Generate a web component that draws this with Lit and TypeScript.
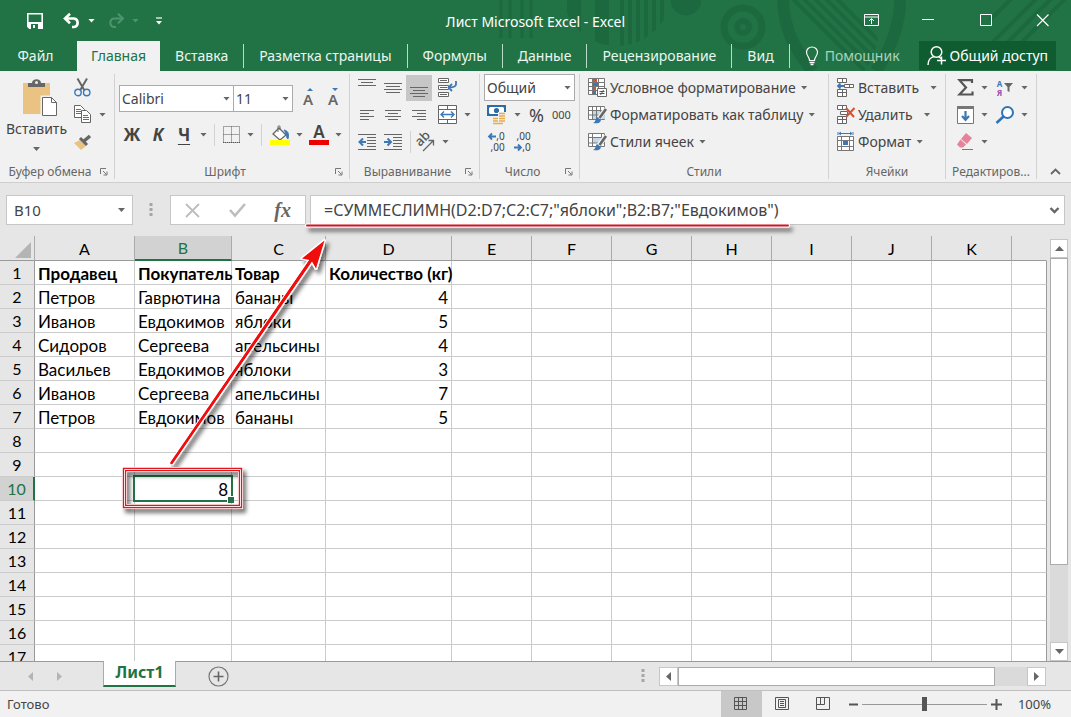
import { LitElement, html, svg, css, nothing, TemplateResult } from "lit";
import { customElement, property, state } from "lit/decorators.js";
import { classMap } from "lit/directives/class-map.js";

type Icon = { w: number; h: number; art: TemplateResult };

const lines = (rows: number[][]) =>
  rows.map(([x1, x2, y]) => svg`<path d="M${x1} ${y}H${x2}" stroke="#666"/>`);

const ICONS: Record<string, Icon> = {
  save: { w: 16, h: 16, art: svg`<path d="M.8.800h14.400v14.400H2.500L.8 13.500z" fill="none" stroke="#fff" stroke-width="1.600"/><path d="M1 9h14v6H1z" fill="#fff"/><path d="M4 11h7v5H4z" fill="#217346"/><path d="M6 12h2v3H6z" fill="#fff"/>` },
  undo: { w: 18, h: 15, art: svg`<path d="M2 5.500H11a4.300 4.300 0 0 1 0 8.500H9" fill="none" stroke="#fff" stroke-width="2.600"/><path d="M7 0.800 2 5.500l5 4.700" fill="none" stroke="#fff" stroke-width="2.600"/>` },
  redo: { w: 18, h: 15, art: svg`<path d="M16 5.500H7A4.300 4.300 0 0 0 7 14H9" fill="none" stroke="#4f9470" stroke-width="2"/><path d="m11 0.800 5 4.700-5 4.700" fill="none" stroke="#4f9470" stroke-width="2"/>` },
  qat: { w: 8, h: 8, art: svg`<path d="M1 1h6" stroke="#fff" stroke-width="1.200"/><path d="M1 4h6L4 7.500z" fill="#fff"/>` },
  ribbonOpts: { w: 16, h: 13, art: svg`<path d="M.5.500h14v11H.5zM.5 3h14M7.500 10V5M5 7l2.500-2.500L10 7" fill="none" stroke="#fff"/>` },
  min: { w: 13, h: 13, art: svg`<path d="M0 5.500h12" stroke="#fff"/>` },
  max: { w: 13, h: 13, art: svg`<path d="M1.500.500h11v11h-11z" fill="none" stroke="#fff"/>` },
  close: { w: 13, h: 13, art: svg`<path d="m1 .5 11.500 11.500m0-11.500L1 12" stroke="#fff" stroke-width="1.200"/>` },
  bulb: { w: 14, h: 20, art: svg`<path d="M4.500 14.500C4.500 11 1.500 10 1.500 6.200a5.500 5.200 0 0 1 11 0c0 3.800-3 4.800-3 8.300z" fill="none" stroke="#fff" stroke-width="1.200"/><path d="M4.500 16.500h5M5.500 18.500h3" stroke="#fff" stroke-width="1.400"/>` },
  person: { w: 19, h: 22, art: svg`<circle cx="9.500" cy="7" r="5.300" fill="none" stroke="#fff" stroke-width="1.500"/><path d="M1 20c0-5 3-8 6.500-8.500M11.500 11.500l2.500 2M14.500 11.500v8M10 15.500h9" fill="none" stroke="#fff" stroke-width="1.500"/>` },
  paste: { w: 35, h: 38, art: svg`<g transform="translate(4 0)"><path d="M0 4h27v31H0z" fill="#eac282"/><path d="M5 4h4c0-5 9-5 9 0h4v4H5z" fill="#666"/><circle cx="13.500" cy="3.500" r="1.500" fill="#eee"/><path d="M19 18h10l5 5v14H19z" fill="#fff" stroke="#f1f1f1" stroke-width="3"/><path d="M19.500 18.500h9l5 5v13h-14zM28.500 18.500v5h5" fill="#fff" stroke="#666"/></g>` },
  cut: { w: 17, h: 19, art: svg`<path d="m3.500 0.500 7 12M13 .5l-7 12" stroke="#666" stroke-width="2"/><circle cx="4" cy="14.500" r="3.200" fill="#f1f1f1" stroke="#3d78b5" stroke-width="1.400"/><circle cx="12.700" cy="14.500" r="3.200" fill="#f1f1f1" stroke="#3d78b5" stroke-width="1.400"/>` },
  copy: { w: 18, h: 19, art: svg`<path d="M.5.500h6l4 4v8H.5z" fill="#fff" stroke="#666"/><path d="M2 4.500h5M2 6.500h5M2 8.500h5" stroke="#3d78b5"/><path d="M7.500 5.500h5l4 4v8h-9z" fill="#fff" stroke="#666"/><path d="M9 10.500h5M9 12.500h6M9 14.500h6" stroke="#3d78b5"/>` },
  brush: { w: 18, h: 16, art: svg`<path d="m0 9 6-3 6 6-5 4z" fill="#eac282"/><path d="m6 4 7 7" stroke="#666" stroke-width="3"/><path d="m10 7 6-5" stroke="#666" stroke-width="3.500"/>` },
  borders: { w: 18, h: 18, art: svg`<path d="M.5.500h16v16H.5zM8.500.500v16M.5 8.500h16" fill="none" stroke="#555" stroke-dasharray="1 1"/><path d="M0 16.500h17" stroke="#555" stroke-dasharray="1 1"/>` },
  fill: { w: 20, h: 20, art: svg`<path d="m3 9 6-6 7 7-6 5z" fill="#fff" stroke="#666" stroke-width="1.300"/><path d="M8 7V1.500c0-1 2-1 2 0V5" fill="none" stroke="#666"/><path d="M14 5c5 1 5 5 4 9-2-1-1-5-4-9z" fill="#3d78b5" stroke="#3d78b5"/><path d="M0 15h20v5H0z" fill="#ff0"/>` },
  top: { w: 18, h: 18, art: svg`${lines([[0, 18, 0.5], [3, 15, 3.5], [0, 18, 6.5]])}` },
  middle: { w: 18, h: 18, art: svg`${lines([[0, 18, 4.5], [2, 16, 7.5], [0, 18, 10.5], [2, 16, 13.5]])}` },
  bottom: { w: 18, h: 18, art: svg`${lines([[0, 18, 8.5], [3, 15, 11.5], [0, 18, 14.5], [3, 15, 17.5]])}` },
  wrap: { w: 19, h: 19, art: svg`<path d="M.5.500h10v4H.5zM.5 7.500h10v4H.5zM.5 14.500h10v4H.5z" fill="#fff" stroke="#666"/><path d="M2 2.500h7M2 9.500h7M2 16.500h7" stroke="#666"/><path d="M18 3v3c0 3-3 3.500-7 3.500M14 6l-3.500 3.500L14 13" fill="none" stroke="#3d78b5" stroke-width="1.800"/>` },
  left: { w: 18, h: 18, art: svg`${lines([[2, 16, 4.5], [2, 11, 7.5], [2, 16, 10.5], [2, 11, 13.5]])}` },
  center: { w: 18, h: 18, art: svg`${lines([[1, 17, 4.5], [4, 14, 7.5], [1, 17, 10.5], [4, 14, 13.5]])}` },
  right: { w: 18, h: 18, art: svg`${lines([[2, 16, 4.5], [7, 16, 7.5], [2, 16, 10.5], [7, 16, 13.5]])}` },
  merge: { w: 19, h: 19, art: svg`<path d="M.5.500h18v18H.5zM.5 4.500h18M.5 14.500h18M9.500.500v4M9.500 14.500v4" fill="#fff" stroke="#666"/><path d="M3 9.500h13M6 6.500l-3 3 3 3M13 6.500l3 3-3 3" fill="none" stroke="#3d78b5" stroke-width="1.400"/>` },
  outdent: { w: 18, h: 18, art: svg`${lines([[0, 18, 1.5], [9, 18, 4.5], [9, 18, 7.5], [9, 18, 10.5], [9, 18, 13.5], [0, 18, 16.5]])}<path d="M1 9h7M5 5.500 1.500 9 5 12.500" fill="none" stroke="#3d78b5" stroke-width="2"/>` },
  indent: { w: 18, h: 18, art: svg`${lines([[0, 18, 1.5], [9, 18, 4.5], [9, 18, 7.5], [9, 18, 10.5], [9, 18, 13.5], [0, 18, 16.5]])}<path d="M0 9h7M3.500 5.500 7 9l-3.500 3.500" fill="none" stroke="#3d78b5" stroke-width="2"/>` },
  orient: { w: 20, h: 20, art: svg`<text transform="translate(5 15) rotate(-45)" font-size="13" font-weight="500" fill="#555">ab</text><path d="m8 19 10-10M13.500 8.500h5v5" fill="none" stroke="#666" stroke-width="1.300"/>` },
  money: { w: 19, h: 19, art: svg`<path d="M1 1h17v9H1z" fill="#fff" stroke="#2e6ca4" stroke-width="2"/><path d="M1 1h3L1 4zM18 1v3l-3-3zM1 10V7l3 3z" fill="#2e6ca4"/><circle cx="9.500" cy="5.500" r="2.600" fill="#2e6ca4"/><path d="M11 7h8v11h-8zM5 12h7v7H5z" fill="#f1f1f1"/><path d="M12 8.500h6M12 11h6M12 13.500h6M12 16h6M6 13.500h5M6 16h5M6 18.500h10" stroke="#e8ab4e" stroke-width="1.500"/>` },
  cond: { w: 19, h: 19, art: svg`<path d="M.5.500h16v16H.5zM.5 4.500h16M.5 8.500h16M.5 12.500h16M4.500.500v16M10.500.500v16" fill="#fff" stroke="#777"/><path d="M5 1h4v3H5zM5 9h3v3H5z" fill="#d35230"/><path d="M5 5h5v3H5zM5 13h3v3H5z" fill="#3d78b5"/><path d="M9.500 10.500h9v8h-9z" fill="#fff" stroke="#666"/><path d="M11.500 13.500h5M11.500 15.500h5M15.500 12l-3 5" stroke="#555"/>` },
  table: { w: 19, h: 18, art: svg`<path d="M.5.500h16v13H.5z" fill="#fff" stroke="#777"/><path d="M5 5h12v8H5z" fill="#c4d7e8"/><path d="M.5 4.500h16M.5 9h16M4.500.500v13M8.500.500v13M12.500.500v13" stroke="#777"/><path d="m18 3-7 9" stroke="#f1f1f1" stroke-width="5"/><path d="m18 3-6.500 9" stroke="#666" stroke-width="2.600"/><path d="m9 11 4 3c-1 4-5 3.500-8 3 3-1 2-4 4-6z" fill="#3d78b5"/>` },
  styles: { w: 19, h: 18, art: svg`<path d="M.5.500h16v13H.5z" fill="#fff" stroke="#777"/><path d="M5 5h8v5H5z" fill="#c4d7e8"/><path d="M.5 4.500h16M.5 10h16M4.500.500v13M13.500.500v13" stroke="#777"/><path d="m18 3-7 9" stroke="#f1f1f1" stroke-width="5"/><path d="m18 3-6.500 9" stroke="#666" stroke-width="2.600"/><path d="m9 11 4 3c-1 4-5 3.500-8 3 3-1 2-4 4-6z" fill="#3d78b5"/>` },
  insert: { w: 18, h: 19, art: svg`<path d="M.5.500h9v4h-9zM5.500.500v4M.5 11.500h9v7h-9zM5.500 11.500v7M.5 14.500h9M7.500 6.500h9v3h-9zM12.500 6.500v3" fill="#fff" stroke="#666"/><path d="M1 8h6M3.500 5.500 1 8l2.500 2.500" fill="none" stroke="#3d78b5" stroke-width="1.800"/>` },
  remove: { w: 18, h: 19, art: svg`<path d="M.5.500h9v4h-9zM5.500.500v4M.5 11.500h9v7h-9zM5.500 11.500v7M.5 14.500h9M3.500 6.500h7v3h-7z" fill="#fff" stroke="#666"/><path d="m9 3 8 9M17.500 3 9 12" stroke="#d35230" stroke-width="2"/>` },
  format: { w: 18, h: 20, art: svg`<path d="M.5 4.500h16v14H.5z" fill="#fff" stroke="#777"/><path d="M.5 8.500h16M.5 14.500h16M4.500 4.500v14M12.500 4.500v14" stroke="#777"/><path d="M6 9h5v4H6z" fill="#3d78b5"/><path d="M2 1.500h13M4 0 2 1.500 4 3M13 0l2 1.500L13 3M1 0v3M16 0v3" fill="none" stroke="#3d78b5"/>` },
  sum: { w: 17, h: 17, art: svg`<path d="M15 4V1.200H2.500L9 8.500l-6.500 7H15.500V12.500" fill="none" stroke="#555" stroke-width="2.200"/>` },
  down: { w: 17, h: 18, art: svg`<path d="M.5.500h16v17H.5z" fill="#fff" stroke="#777"/><path d="M0 0h17v3H0z" fill="#777"/><path d="M8.500 5v8M5 10l3.500 3.800L12 10" fill="none" stroke="#3d78b5" stroke-width="2.200"/>` },
  eraser: { w: 18, h: 17, art: svg`<path d="m10 0 6 5-5 6-6-5z" fill="#e8829a"/><path d="m4.500 6.500 5.500 5-3 3H4l-3-3z" fill="#e8829a"/><path d="M6 16.500h11" stroke="#777"/>` },
  funnel: { w: 9, h: 9, art: svg`<path d="M0 0h9L5.500 4v5l-2-1V4z" fill="#666"/>` },
  find: { w: 18, h: 18, art: svg`<circle cx="11.500" cy="6.500" r="5.500" fill="#fff" stroke="#2e75b6" stroke-width="2"/><path d="m7.500 10.500-7 6.500" stroke="#2e75b6" stroke-width="2.600"/>` },
  arrowL: { w: 8, h: 7, art: svg`<path d="M1 3.500h7M4 .5l-3 3 3 3" fill="none" stroke="#3d78b5" stroke-width="1.800"/>` },
  arrowR: { w: 8, h: 7, art: svg`<path d="M0 3.500h7M4 .5l3 3-3 3" fill="none" stroke="#3d78b5" stroke-width="1.800"/>` },
  launcher: { w: 8, h: 8, art: svg`<path d="M.5 6V.500H6M3 3l3.500 3.500M7 3.500V7H3.500" fill="none" stroke="#777"/>` },
  collapse: { w: 11, h: 7, art: svg`<path d="m1 6 4.500-4.500L10 6" fill="none" stroke="#666" stroke-width="1.800"/>` },
  expand: { w: 11, h: 7, art: svg`<path d="m1.500 1 4 4 4-4" fill="none" stroke="#666" stroke-width="2.400"/>` },
  cancel: { w: 15, h: 15, art: svg`<path d="m1 1 13 13M14 1 1 14" stroke="#bdbdbd" stroke-width="1.800"/>` },
  accept: { w: 17, h: 14, art: svg`<path d="m1 7 5 5.500L16 1" fill="none" stroke="#bdbdbd" stroke-width="2.600"/>` },
  dots: { w: 4, h: 14, art: svg`<path d="M.5 0h3v3h-3zM.5 5h3v3h-3zM.5 10h3v3h-3z" fill="#a6a6a6"/>` },
  plusCircle: { w: 21, h: 21, art: svg`<circle cx="10.500" cy="10.500" r="9.500" fill="none" stroke="#777" stroke-width="1.200"/><path d="M5.500 10.500h10M10.500 5.500v10" stroke="#666" stroke-width="1.600"/>` },
  triUp: { w: 9, h: 5, art: svg`<path d="M0 5 4.500 0 9 5z" fill="#666"/>` },
  triDown: { w: 9, h: 5, art: svg`<path d="M0 0 4.500 5 9 0z" fill="#666"/>` },
  triLeft: { w: 5, h: 9, art: svg`<path d="M5 0 0 4.500 5 9z" fill="#666"/>` },
  triRight: { w: 5, h: 9, art: svg`<path d="M0 0 5 4.500 0 9z" fill="#666"/>` },
  navLeft: { w: 5, h: 9, art: svg`<path d="M5 0 0 4.500 5 9z" fill="#b4b4b4"/>` },
  navRight: { w: 5, h: 9, art: svg`<path d="M0 0 5 4.500 0 9z" fill="#b4b4b4"/>` },
  normal: { w: 14, h: 14, art: svg`<path d="M.5.500h12v12H.5zM4.500.500v12M8.500.500v12M.5 4.500h12M.5 8.500h12" fill="none" stroke="#555"/>` },
  layout: { w: 14, h: 14, art: svg`<path d="M.5.500h13v12H.5zM3.500 2.500h7v8h-7zM5 4.500h4M5 6.500h4M5 8.500h4" fill="none" stroke="#555"/>` },
  pageBreak: { w: 14, h: 14, art: svg`<path d="M.5.500h13v12H.5zM4.500.500v7M8.500.500v7M.5 7.500h8" fill="none" stroke="#555"/>` },
  zoomOut: { w: 9, h: 11, art: svg`<path d="M0 5.500h9" stroke="#555" stroke-width="2"/>` },
  zoomIn: { w: 11, h: 11, art: svg`<path d="M0 5.500h11M5.500 0v11" stroke="#555" stroke-width="2"/>` },
};

const icon = (name: string) => {
  const i = ICONS[name];
  return html`<svg width=${i.w} height=${i.h} viewBox="0 0 ${i.w} ${i.h}" aria-hidden="true">${i.art}</svg>`;
};

const base = css`
  :host { font-family: "Noto Sans", "Open Sans", sans-serif; font-size: 14px; line-height: 20px; color: #444; }
  * { box-sizing: border-box; }
  svg { display: block; flex: none; overflow: visible; }
  button { font: inherit; color: inherit; background: none; border: 0; padding: 0; margin: 0; flex: none;
    display: flex; align-items: center; justify-content: center; white-space: nowrap; }
  .caret { width: 7px; height: 4px; flex: none; background: #666; clip-path: polygon(0 0, 100% 0, 50% 100%); }
`;

@customElement("xl-title-bar")
class TitleBar extends LitElement {
  static styles = [base, css`
    :host { display: grid; grid-template-columns: 1fr auto 1fr; height: 41px; align-items: center; color: #fff; }
    .quick { display: flex; align-items: center; padding-left: 27px; gap: 7px; }
    .quick .undo { margin-left: 13px; }
    .quick .redo { margin-left: 5px; }
    .quick .more { margin-left: 9px; }
    .light { background: #fff; }
    .dim { background: #4f9470; }
    .title { padding-top: 2px; }
    .window { display: flex; justify-content: flex-end; }
    .window button { width: 57px; height: 38px; }
  `];
  render() {
    return html`
      <div class="quick">
        <button aria-label="Сохранить">${icon("save")}</button>
        <button class="undo" aria-label="Отменить">${icon("undo")}</button>
        <span class="caret light"></span>
        <button class="redo" aria-label="Вернуть">${icon("redo")}</button>
        <span class="caret dim"></span>
        <button class="more" aria-label="Настройка панели">${icon("qat")}</button>
      </div>
      <div class="title">Лист Microsoft Excel - Excel</div>
      <div class="window">
        <button aria-label="Параметры ленты">${icon("ribbonOpts")}</button>
        <button aria-label="Свернуть">${icon("min")}</button>
        <button aria-label="Развернуть">${icon("max")}</button>
        <button aria-label="Закрыть">${icon("close")}</button>
      </div>`;
  }
}

@customElement("xl-tabs")
class Tabs extends LitElement {
  @state() active = "Главная";
  static styles = [base, css`
    :host { display: flex; height: 30px; color: #e9f7ef; }
    .tab { padding: 0 15px; }
    .file { width: 77px; padding: 0 6px 0 0; }
    .tab.line { border-right: 1px solid #b9dcc8; height: 24px; align-self: center; }
    .tab.active { background: #f1f1f1; color: #217346; padding: 0 14px; }
    .tell { gap: 6px; padding: 0 16px 0 15px; color: #a9d3bb; }
    .share { gap: 4px; background: #0f5c30; padding: 0 8px 0 8px; margin: 0 15px 1px auto; color: #fff; }
  `];
  render() {
    const names = ["Главная", "Вставка", "Разметка страницы", "Формулы", "Данные", "Рецензирование", "Вид"];
    return html`
      <button class="tab file">Файл</button>
      ${names.map((n) => html`<button
        class=${classMap({ tab: true, active: n === this.active, line: n !== this.active })}
        @click=${() => (this.active = n)}>${n}</button>`)}
      <button class="tell">${icon("bulb")}Помощник</button>
      <button class="share">${icon("person")}Общий доступ</button>`;
  }
}

@customElement("xl-ribbon")
class Ribbon extends LitElement {
  static styles = [base, css`
    :host { display: grid; grid-template-columns: 115px 235px 130px 100px minmax(240px, 1fr) 117px 91px 34px;
      height: 112px; background: #f1f1f1; border-bottom: 1px solid #cfcfcf; padding: 3px 0 3px; }
    .group { display: grid; grid-template-rows: 1fr 14px; border-right: 1px solid #d2d2d2; min-width: 0; }
    .caption { display: grid; grid-template-columns: 1fr auto; align-items: center; font-size: 12px; line-height: 14px; color: #666;
      text-align: center; padding: 0 6px 0 0; white-space: nowrap; }
    .caption.plain { padding: 0; }
    .rows { display: flex; flex-direction: column; }
    .row { display: flex; align-items: center; height: 27px; }
    .clip { display: flex; padding-left: 6px; gap: 7px; }
    .paste { flex-direction: column; justify-content: flex-start; gap: 2px; width: 61px; padding-top: 5px; }
    .paste .caret { margin-top: 6px; }
    .pair { gap: 7px; }
    .font { padding: 11px 0 0 4px; gap: 9px; }
    .pick { display: grid; align-items: center; }
    .pick select { grid-area: 1 / 1; appearance: none; width: 100%; height: 27px; background: #fff; border: 1px solid #ababab;
      border-radius: 0; font: inherit; color: inherit; padding: 0 2px; margin: 0; }
    .pick .caret { grid-area: 1 / 1; justify-self: end; margin-right: 4px; pointer-events: none; }
    .face { width: 115px; }
    .size { width: 60px; margin-left: -1px; }
    .step { display: grid; width: 20px; margin-left: 5px; justify-items: center; }
    .letter { font-size: 15px; font-weight: 600; color: #666; }
    .hat { width: 6px; height: 3px; background: #3d78b5; justify-self: end; margin-bottom: -2px; clip-path: polygon(50% 0, 100% 100%, 0 100%); }
    .hat.flip { clip-path: polygon(0 0, 100% 0, 50% 100%); }
    .fmt { width: 26px; font-size: 17px; font-weight: 700; }
    .ital { font-style: italic; }
    .under { text-decoration: underline; text-underline-offset: 3px; text-decoration-thickness: 1px; margin-right: 3px; }
    .split { display: flex; align-items: center; gap: 6px; margin-right: 6px; }
    .split.tight { margin-right: 0; }
    .rule { width: 1px; height: 22px; background: #d2d2d2; margin: 0 8px 0 7px; }
    .color { display: grid; justify-items: center; width: 20px; height: 20px; grid-template-rows: 15px 5px; font-size: 17px; line-height: 14px; font-weight: 600; }
    .bar { background: #e00; width: 20px; height: 5px; }
    .align { padding-left: 4px; }
    .align button { width: 26px; height: 26px; }
    .align .on { background: #c6c6c6; }
    .align .wide { margin-left: 2px; }
    .align .caret { margin-left: 4px; }
    .align .rule { margin: 0 1px 0 4px; }
    .num { padding-left: 4px; }
    .kind { width: 91px; }
    .cash { padding-left: 3px; gap: 8px; }
    .pct { font-size: 18px; }
    .zeros { font-size: 11px; }
    .decs { padding-left: 4px; gap: 9px; }
    .dec { display: grid; justify-items: end; width: 17px; font-size: 10px; line-height: 11px; }
    .dec span { display: flex; align-items: center; }
    .list { padding-left: 8px; }
    .list button { gap: 3px; }
    .list .caret { margin-left: 2px; }
    .list .far .caret { margin-left: 8px; }
    .edit { padding-left: 10px; }
    .edit .row { gap: 7px; }
    .edit .row button { width: 18px; }
    .edit .caret + button { margin-left: 1px; }
    .edit .row .az { gap: 2px; font-size: 8px; line-height: 9px; font-weight: 700; }
    .az i { font-style: normal; color: #3d78b5; display: block; }
    .az i + i { color: #9a4fb0; }
    .end { display: flex; align-items: flex-end; padding: 0 0 4px 13px; }
  `];
  private caption(text: string, launcher = true) {
    return html`<div class="caption ${launcher ? "" : "plain"}"><span>${text}</span>${launcher
      ? html`<button aria-label="Параметры: ${text}">${icon("launcher")}</button>` : nothing}</div>`;
  }
  private tool(name: string, label: string, cls = "") {
    return html`<button class=${cls} aria-label=${label}>${icon(name)}</button>`;
  }
  private line(name: string, text: string, far = false) {
    return html`<div class="row"><button class=${far ? "far" : ""}>${icon(name)}${text}<span class="caret"></span></button></div>`;
  }
  render() {
    const caret = html`<span class="caret"></span>`;
    return html`
      <div class="group">
        <div class="clip">
          <button class="paste">${icon("paste")}Вставить${caret}</button>
          <div class="rows">
            <div class="row">${this.tool("cut", "Вырезать")}</div>
            <div class="row pair">${this.tool("copy", "Копировать")}${caret}</div>
            <div class="row">${this.tool("brush", "Формат по образцу")}</div>
          </div>
        </div>
        ${this.caption("Буфер обмена")}
      </div>
      <div class="group">
        <div class="rows font">
          <div class="row">
            <span class="pick face"><select aria-label="Шрифт"><option>Calibri</option></select>${caret}</span>
            <span class="pick size"><select aria-label="Размер"><option>11</option></select>${caret}</span>
            <button class="step" aria-label="Увеличить"><span class="hat"></span><span class="letter">A</span></button>
            <button class="step" aria-label="Уменьшить"><span class="hat flip"></span><span class="letter">A</span></button>
          </div>
          <div class="row">
            <button class="fmt">Ж</button>
            <button class="fmt ital">К</button>
            <button class="fmt under">Ч</button>
            ${caret}<span class="rule"></span>
            <span class="split tight">${this.tool("borders", "Границы")}${caret}</span><span class="rule"></span>
            <span class="split">${this.tool("fill", "Цвет заливки")}${caret}</span>
            <span class="split"><button class="color" aria-label="Цвет текста"><span>A</span><span class="bar"></span></button>${caret}</span>
          </div>
        </div>
        ${this.caption("Шрифт")}
      </div>
      <div class="group">
        <div class="rows align">
          <div class="row">${this.tool("top", "По верхнему краю")}${this.tool("middle", "По середине")}${this.tool("bottom", "По нижнему краю", "on")}${this.tool("wrap", "Перенос текста", "wide")}</div>
          <div class="row">${this.tool("left", "По левому краю")}${this.tool("center", "По центру")}${this.tool("right", "По правому краю")}${this.tool("merge", "Объединить", "wide")}${caret}</div>
          <div class="row">${this.tool("outdent", "Уменьшить отступ")}${this.tool("indent", "Увеличить отступ")}<span class="rule"></span>${this.tool("orient", "Ориентация")}${caret}</div>
        </div>
        ${this.caption("Выравнивание")}
      </div>
      <div class="group">
        <div class="rows num">
          <div class="row"><span class="pick kind"><select aria-label="Формат числа"><option>Общий</option></select>${caret}</span></div>
          <div class="row cash">${this.tool("money", "Денежный")}${caret}<button class="pct">%</button><button class="zeros">000</button></div>
          <div class="row decs">
            <button class="dec" aria-label="Увеличить разрядность"><span>${icon("arrowL")},0</span><span>,00</span></button>
            <button class="dec" aria-label="Уменьшить разрядность"><span>,00</span><span>${icon("arrowR")},0</span></button>
          </div>
        </div>
        ${this.caption("Число")}
      </div>
      <div class="group">
        <div class="rows list">
          ${this.line("cond", "Условное форматирование")}
          ${this.line("table", "Форматировать как таблицу")}
          ${this.line("styles", "Стили ячеек")}
        </div>
        ${this.caption("Стили", false)}
      </div>
      <div class="group">
        <div class="rows list">
          ${this.line("insert", "Вставить", true)}
          ${this.line("remove", "Удалить", true)}
          ${this.line("format", "Формат")}
        </div>
        ${this.caption("Ячейки", false)}
      </div>
      <div class="group">
        <div class="rows edit">
          <div class="row">${this.tool("sum", "Сумма")}${caret}<button class="az" aria-label="Сортировка"><span><i>A</i><i>Я</i></span>${icon("funnel")}</button>${caret}</div>
          <div class="row">${this.tool("down", "Заполнить")}${caret}${this.tool("find", "Найти")}${caret}</div>
          <div class="row">${this.tool("eraser", "Очистить")}${caret}</div>
        </div>
        ${this.caption("Редактиров...", false)}
      </div>
      <div class="end">${this.tool("collapse", "Свернуть ленту")}</div>`;
  }
}

@customElement("xl-formula-bar")
class FormulaBar extends LitElement {
  static styles = [base, css`
    :host { display: flex; align-items: center; padding: 12px 6px 11px; color: #444; }
    .box { display: flex; align-items: center; height: 30px; background: #fff; border: 1px solid #c6c6c6; }
    .box input { border: 0; background: none; outline: 0; font: inherit; color: inherit; padding: 0; margin: 0; min-width: 0; flex: 1; }
    .name { width: 127px; padding: 0 7px; font-size: 15px; }
    .grip { margin: 0 17px 0 16px; }
    .actions { width: 136px; justify-content: space-between; padding: 0 14px; }
    .fx { font: italic 700 20px/24px "Liberation Serif", serif; color: #666; }
    .formula { flex: 1; margin-left: 4px; padding: 0 4px 0 13px; font-size: 16px; }
  `];
  render() {
    return html`
      <div class="box name"><input aria-label="Имя ячейки" value="B10"><span class="caret"></span></div>
      <span class="grip">${icon("dots")}</span>
      <div class="box actions">
        <button aria-label="Отмена">${icon("cancel")}</button>
        <button aria-label="Ввод">${icon("accept")}</button>
        <button class="fx">fx</button>
      </div>
      <div class="box formula">
        <input aria-label="Строка формул" value='=СУММЕСЛИМН(D2:D7;C2:C7;"яблоки";B2:B7;"Евдокимов")'>
        <button aria-label="Развернуть строку формул">${icon("expand")}</button>
      </div>`;
  }
}

@customElement("xl-grid")
class Grid extends LitElement {
  @property({ attribute: false }) rows: string[][] = [
    ["Продавец", "Покупатель", "Товар", "Количество (кг)"],
    ["Петров", "Гаврютина", "бананы", "4"],
    ["Иванов", "Евдокимов", "яблоки", "5"],
    ["Сидоров", "Сергеева", "апельсины", "4"],
    ["Васильев", "Евдокимов", "яблоки", "3"],
    ["Иванов", "Сергеева", "апельсины", "7"],
    ["Петров", "Евдокимов", "бананы", "5"],
    [], [], ["", "8"],
  ];
  static styles = [base, css`
    :host { display: grid; grid-template-columns: 1fr 24px; min-height: 0; }
    .sheet { overflow: hidden; min-height: 0; }
    table { width: 100%; border-collapse: separate; border-spacing: 0; table-layout: fixed; font-family: "Lato", sans-serif; font-size: 16px; color: #000; }
    .w-h { width: 35px; } .w-a { width: 100px; } .w-b { width: 97px; } .w-c { width: 94px; } .w-d { width: 126px; } .w-n { width: 80px; }
    th, td { height: 24px; padding: 0 3px; border: 0 solid #cbcbcb; border-width: 0 1px 1px 0; font-weight: 400; line-height: 23px;
      text-align: left; white-space: nowrap; overflow: visible; }
    td { font-size: 17px; line-height: 21px; padding-top: 2px; }
    td:last-child { border-right-color: #9a9a9a; }
    thead th { height: 25px; text-align: center; background: #e6e6e6; border-color: #ababab; border-bottom-color: #9a9a9a; }
    thead th:last-child { border-right-color: #e6e6e6; }
    tbody { background: #fff; }
    tbody th { text-align: center; background: #e6e6e6; border-right-color: #9a9a9a; padding: 0; }
    .corner { border-right-color: #ababab; padding: 0 3px 2px; vertical-align: bottom; }
    .corner span { display: block; margin-left: auto; width: 16px; height: 16px; background: #b4b4b4; clip-path: polygon(100% 0, 100% 100%, 0 100%); }
    thead .sel { background: #d2d2d2; color: #217346; border-bottom: 2px solid #217346; }
    tbody .sel { background: #d2d2d2; color: #217346; border-right: 2px solid #217346; }
    .head td { font-weight: 700; }
    .num { text-align: right; }
    .cursor { position: relative; }
    .cursor::before { content: ""; position: absolute; inset: -2px; border: 2px solid #217346; }
    .cursor::after { content: ""; position: absolute; right: -3px; bottom: -3px; width: 6px; height: 6px; background: #217346; border: solid #fff; border-width: 1px 0 0 1px; }
    .scroll { display: flex; flex-direction: column; padding: 3px 3px 0; }
    .scroll button { height: 19px; background: #fff; border: 1px solid #c6c6c6; }
    .track { flex: 1; background: #dadada; display: grid; grid-template-rows: 4fr 1fr; }
    .thumb { background: #fff; border: 1px solid #ababab; }
  `];
  render() {
    const letters = ["A", "B", "C", "D", "E", "F", "G", "H", "I", "J", "K"];
    const widths = ["w-a", "w-b", "w-c", "w-d"];
    return html`
      <div class="sheet">
        <table>
          <colgroup><col class="w-h">${letters.map((_, i) => html`<col class=${widths[i] ?? "w-n"}>`)}<col></colgroup>
          <thead><tr><th class="corner"><span></span></th>
            ${letters.map((l) => html`<th scope="col" class=${l === "B" ? "sel" : ""}>${l}</th>`)}<th></th></tr></thead>
          <tbody>${Array.from({ length: 17 }, (_, r) => html`
            <tr class=${r === 0 ? "head" : ""}>
              <th scope="row" class=${r === 9 ? "sel" : ""}>${r + 1}</th>
              ${Array.from({ length: 12 }, (_, c) => {
                const v = this.rows[r]?.[c] ?? "";
                return html`<td class=${classMap({ num: /^\d+$/.test(v), cursor: r === 9 && c === 1 })}>${v}</td>`;
              })}
            </tr>`)}</tbody>
        </table>
      </div>
      <div class="scroll">
        <button aria-label="Вверх">${icon("triUp")}</button>
        <div class="track"><div class="thumb"></div></div>
        <button aria-label="Вниз">${icon("triDown")}</button>
      </div>`;
  }
}

@customElement("xl-sheet-bar")
class SheetBar extends LitElement {
  static styles = [base, css`
    :host { display: grid; grid-template-columns: 103px 73px 1fr 430px; height: 29px; background: #e6e6e6; }
    .nav { display: flex; align-items: center; gap: 24px; padding-left: 28px; border-top: 1px solid #9a9a9a; }
    .tab { height: 26px; background: #fff; border: solid #ababab; border-width: 0 1px; border-bottom: 2px solid #217346; color: #217346; font-weight: 700; font-size: 16px; padding-bottom: 2px; }
    .add { display: flex; align-items: center; padding-left: 32px; border-top: 1px solid #9a9a9a; }
    .scroll { display: flex; align-items: center; border-top: 1px solid #9a9a9a; padding-right: 25px; }
    .scroll button { width: 19px; height: 19px; background: #fff; border: 1px solid #c6c6c6; }
    .grip { margin-right: 14px; }
    .track { flex: 1; height: 19px; background: #dadada; display: grid; grid-template-columns: 318fr 32fr; }
    .thumb { background: #fff; border: 1px solid #ababab; }
  `];
  render() {
    return html`
      <div class="nav"><button aria-label="Предыдущий лист">${icon("navLeft")}</button><button aria-label="Следующий лист">${icon("navRight")}</button></div>
      <button class="tab">Лист1</button>
      <div class="add"><button aria-label="Новый лист">${icon("plusCircle")}</button></div>
      <div class="scroll">
        <span class="grip">${icon("dots")}</span>
        <button aria-label="Влево">${icon("triLeft")}</button>
        <div class="track"><div class="thumb"></div></div>
        <button aria-label="Вправо">${icon("triRight")}</button>
      </div>`;
  }
}

@customElement("xl-status-bar")
class StatusBar extends LitElement {
  static styles = [base, css`
    :host { display: flex; align-items: center; height: 27px; border-top: 1px solid #c0c0c0; background: #f1f1f1; font-size: 13px; padding: 0 20px 0 7px; }
    .views { display: flex; height: 100%; margin-left: auto; }
    .views button { width: 41px; }
    .views .on { background: #c8c8c8; }
    .zoom { display: flex; align-items: center; gap: 4px; margin-left: 5px; }
    input { appearance: none; width: 125px; height: 14px; margin: 0; background: linear-gradient(#999, #999) center / 100% 1px no-repeat; }
    input::-webkit-slider-thumb { appearance: none; width: 5px; height: 14px; background: #555; }
    .pct { margin-left: 12px; }
  `];
  render() {
    return html`
      <span>Готово</span>
      <div class="views">
        <button class="on" aria-label="Обычный">${icon("normal")}</button>
        <button aria-label="Разметка страницы">${icon("layout")}</button>
        <button aria-label="Страничный">${icon("pageBreak")}</button>
      </div>
      <div class="zoom">
        <button aria-label="Уменьшить масштаб">${icon("zoomOut")}</button>
        <input type="range" aria-label="Масштаб" min="0" max="100" value="50">
        <button aria-label="Увеличить масштаб">${icon("zoomIn")}</button>
        <span class="pct">100%</span>
      </div>`;
  }
}

@customElement("app-root")
class AppRoot extends LitElement {
  static styles = [base, css`
    :host { display: flex; flex-direction: column; height: 100vh; overflow: hidden; background: #e6e6e6; }
    header { background: #217346; position: relative; }
    .decor { position: absolute; right: 0; top: 0; overflow: hidden; }
    xl-title-bar, xl-tabs { position: relative; }
    main { flex: 1; min-height: 0; display: flex; flex-direction: column; position: relative; }
    xl-grid { flex: 1; }
    .marks { position: absolute; left: 0; top: 0; pointer-events: none; }
  `];
  private decor() {
    const bars = (xs: number[], y2: number, w: number) => xs.map((x) => svg`<path d="M${x} 0V${y2}" stroke-width=${w}/>`);
    return html`<svg class="decor" width="591" height="71" viewBox="480 0 591 71" aria-hidden="true">
      <defs>
        <clipPath id="disc"><circle cx="617" cy="-8" r="54"/></clipPath>
        <clipPath id="ring"><path d="M792 0h80c14 40 0 60-8 71h-72z"/></clipPath>
      </defs>
      <g stroke="#1d693f" fill="none">
        ${bars([501, 510, 522, 531], 38, 3)}
        <g clip-path="url(#disc)">${bars([574, 602], 60, 14)}${bars([622, 630, 638, 646, 654, 662], 60, 4)}</g>
        <circle cx="686" cy="0" r="15" fill="#1d693f"/>
        <circle cx="743" cy="27" r="19" stroke-width="7"/>
        <circle cx="743" cy="27" r="6" stroke-width="6"/>
        <path d="M783 0c1 30 12 50 30 71M900 0c0 25-10 50-24 71" stroke-width="12"/>
        <g clip-path="url(#ring)" stroke-width="4"><path d="m790-4 80 80M801-4l80 80M812-4l80 80M823-4l80 80M834-4l80 80"/></g>
        <path d="m985 50 56-56M1000 50l56-56M1018 46l52-52M990 20l22-22" stroke-width="4"/>
      </g>
    </svg>`;
  }
  private marks() {
    return html`<svg class="marks" width="800" height="340" viewBox="0 183 800 340" aria-hidden="true">
      <defs><filter id="sh" filterUnits="userSpaceOnUse" x="0" y="183" width="800" height="340"><feDropShadow dx="3" dy="4" stdDeviation="2" flood-color="#000" flood-opacity="0.55"/></filter></defs>
      <g filter="url(#sh)"><path d="M307 225.500H788" stroke="#fff" stroke-width="4" stroke-linecap="round"/><path d="M307 225.500H788" stroke="#cf1322" stroke-width="2" stroke-linecap="round"/></g>
      <g filter="url(#sh)">
        <path d="M171 462.500 309.500 260l-7.500-1.500 22.500-18-8.500 28-4-7L172.500 463.500z" fill="#f00808" stroke="#fff" stroke-width="3" stroke-linejoin="round" paint-order="stroke"/>
        <path d="m171.500 463 139-202.500" stroke="#f00808" stroke-width="2.600" stroke-linecap="round"/>
      </g>
      <g filter="url(#sh)" fill="none">
        <path d="M124.500 469.500h116v37h-116z" stroke="#fff" stroke-width="5"/>
        <path d="M124.500 469.500h116v37h-116z" stroke="#e0141a" stroke-width="3.400"/>
        <path d="M124.500 469.500h116v37h-116z" stroke="#ffe6e6" stroke-width="1"/>
      </g>
    </svg>`;
  }
  render() {
    return html`
      <header>${this.decor()}<xl-title-bar></xl-title-bar><xl-tabs></xl-tabs></header>
      <xl-ribbon></xl-ribbon>
      <main>
        <xl-formula-bar></xl-formula-bar>
        <xl-grid></xl-grid>
        ${this.marks()}
      </main>
      <xl-sheet-bar></xl-sheet-bar>
      <xl-status-bar></xl-status-bar>`;
  }
}
